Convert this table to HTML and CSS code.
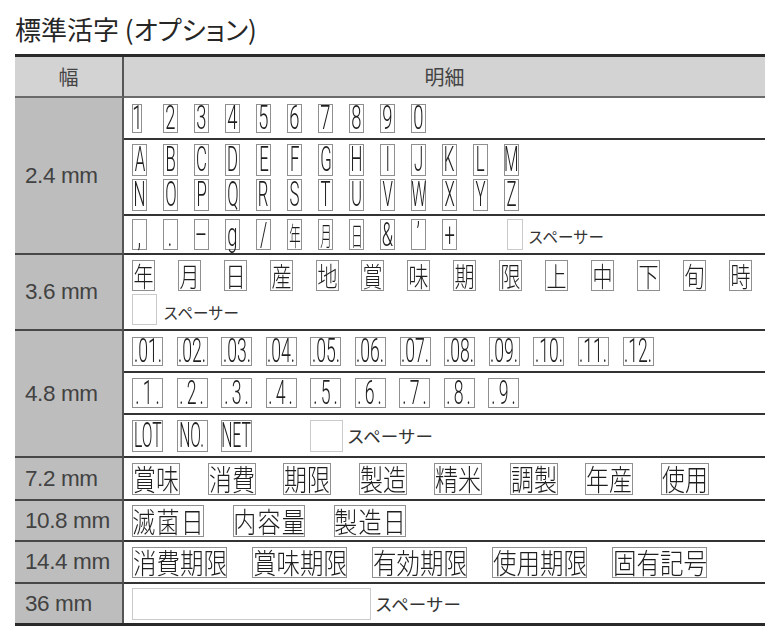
FILE: index.html
```html
<!DOCTYPE html>
<html lang="ja">
<head>
<meta charset="utf-8">
<title>標準活字 (オプション)</title>
<link rel="stylesheet" href="styles.css">
</head>
<body>
<div class="page">
  <h1 class="title">標準活字 (オプション)</h1>
  <div class="tbl">
    <div class="w hd">幅</div>
    <div class="d hd">明細</div>

    <div class="w">2.4 mm</div>
    <div class="d">
      <div class="sub s-dig">
        <div class="g31">
          <span class="b lt n1"><span>1</span></span><span class="b lt"><span>2</span></span><span class="b lt"><span>3</span></span><span class="b lt"><span>4</span></span><span class="b lt"><span>5</span></span><span class="b lt"><span>6</span></span><span class="b lt"><span>7</span></span><span class="b lt"><span>8</span></span><span class="b lt"><span>9</span></span><span class="b lt"><span>0</span></span>
        </div>
      </div>
      <div class="sub s-alpha">
        <div class="g31">
          <span class="b lt"><span>A</span></span><span class="b lt"><span>B</span></span><span class="b lt"><span>C</span></span><span class="b lt"><span>D</span></span><span class="b lt"><span>E</span></span><span class="b lt"><span>F</span></span><span class="b lt"><span>G</span></span><span class="b lt"><span>H</span></span><span class="b lt"><span>I</span></span><span class="b lt"><span>J</span></span><span class="b lt"><span>K</span></span><span class="b lt"><span>L</span></span><span class="b lt"><span>M</span></span>
        </div>
        <div class="g31">
          <span class="b lt"><span>N</span></span><span class="b lt"><span>O</span></span><span class="b lt"><span>P</span></span><span class="b lt"><span>Q</span></span><span class="b lt"><span>R</span></span><span class="b lt"><span>S</span></span><span class="b lt"><span>T</span></span><span class="b lt"><span>U</span></span><span class="b lt"><span>V</span></span><span class="b lt"><span>W</span></span><span class="b lt"><span>X</span></span><span class="b lt"><span>Y</span></span><span class="b lt"><span>Z</span></span>
        </div>
      </div>
      <div class="sub s-punct">
        <div class="g31">
          <span class="b lt"><span>,</span></span><span class="b lt"><span>.</span></span><span class="b lt"><span>–</span></span><span class="b lt"><span>g</span></span><span class="b lt"><span>/</span></span><span class="b cj"><span>年</span></span><span class="b cj"><span>月</span></span><span class="b cj"><span>日</span></span><span class="b lt"><span>&amp;</span></span><span class="b lt"><span>’</span></span><span class="b lt"><span>+</span></span>
        </div>
        <span class="sp"></span><span class="spt">スペーサー</span>
      </div>
    </div>

    <div class="w">3.6 mm</div>
    <div class="d">
      <div class="sub s-36">
        <div class="krow">
          <span class="b cj"><span>年</span></span><span class="b cj"><span>月</span></span><span class="b cj"><span>日</span></span><span class="b cj"><span>産</span></span><span class="b cj"><span>地</span></span><span class="b cj"><span>賞</span></span><span class="b cj"><span>味</span></span><span class="b cj"><span>期</span></span><span class="b cj"><span>限</span></span><span class="b cj"><span>上</span></span><span class="b cj"><span>中</span></span><span class="b cj"><span>下</span></span><span class="b cj"><span>旬</span></span><span class="b cj"><span>時</span></span>
        </div>
        <div class="sprow"><span class="sp"></span><span class="spt">スペーサー</span></div>
      </div>
    </div>

    <div class="w">4.8 mm</div>
    <div class="d">
      <div class="sub s-01">
        <span class="b lt"><span>.01.</span></span><span class="b lt"><span>.02.</span></span><span class="b lt"><span>.03.</span></span><span class="b lt"><span>.04.</span></span><span class="b lt"><span>.05.</span></span><span class="b lt"><span>.06.</span></span><span class="b lt"><span>.07.</span></span><span class="b lt"><span>.08.</span></span><span class="b lt"><span>.09.</span></span><span class="b lt"><span>.10.</span></span><span class="b lt"><span>.11.</span></span><span class="b lt"><span>.12.</span></span>
      </div>
      <div class="sub s-1">
        <span class="b lt"><span>.1.</span></span><span class="b lt"><span>.2.</span></span><span class="b lt"><span>.3.</span></span><span class="b lt"><span>.4.</span></span><span class="b lt"><span>.5.</span></span><span class="b lt"><span>.6.</span></span><span class="b lt"><span>.7.</span></span><span class="b lt"><span>.8.</span></span><span class="b lt"><span>.9.</span></span>
      </div>
      <div class="sub s-lot">
        <span class="b lt"><span>LOT</span></span><span class="b lt"><span>NO.</span></span><span class="b lt"><span>NET</span></span>
        <span class="sp"></span><span class="spt">スペーサー</span>
      </div>
    </div>

    <div class="w">7.2 mm</div>
    <div class="d">
      <div class="sub s-72">
        <span class="b cj"><span>賞味</span></span><span class="b cj"><span>消費</span></span><span class="b cj"><span>期限</span></span><span class="b cj"><span>製造</span></span><span class="b cj"><span>精米</span></span><span class="b cj"><span>調製</span></span><span class="b cj"><span>年産</span></span><span class="b cj"><span>使用</span></span>
      </div>
    </div>

    <div class="w">10.8 mm</div>
    <div class="d">
      <div class="sub s-108">
        <span class="b cj"><span>滅菌日</span></span><span class="b cj"><span>内容量</span></span><span class="b cj"><span>製造日</span></span>
      </div>
    </div>

    <div class="w">14.4 mm</div>
    <div class="d">
      <div class="sub s-144">
        <span class="b cj"><span>消費期限</span></span><span class="b cj"><span>賞味期限</span></span><span class="b cj"><span>有効期限</span></span><span class="b cj"><span>使用期限</span></span><span class="b cj"><span>固有記号</span></span>
      </div>
    </div>

    <div class="w last">36 mm</div>
    <div class="d">
      <div class="sub s-36mm last">
        <span class="sp"></span><span class="spt">スペーサー</span>
      </div>
    </div>
  </div>
</div>
</body>
</html>
```

FILE: styles.css
```css
* { box-sizing: border-box; }
html, body { margin: 0; padding: 0; background: #fff; }
body { font-family: "Noto Sans CJK JP", sans-serif; color: #333; }

.page { width: 780px; padding: 0 15px; }

.title {
  margin: 0;
  height: 54px;
  padding-top: 14px;
  font-size: 26px;
  line-height: 30px;
  font-weight: 400;
  color: #262626;
  font-feature-settings: "palt";
}

.tbl {
  display: grid;
  grid-template-columns: 109px 641px;
  border-top: 3px solid #2a2a2a;
  border-bottom: 3px solid #2a2a2a;
}

.w {
  background: #bdbdbd;
  border-right: 2px solid #555;
  border-bottom: 2px solid #474747;
  display: flex;
  align-items: center;
  padding-left: 10px;
  font-family: "Liberation Sans", Arial, sans-serif;
  font-size: 22.5px;
  letter-spacing: -0.4px;
  color: #424242;
}
.w.last { border-bottom: 0; }

.hd {
  background: #d3d3d3;
  height: 41px;
  display: flex;
  align-items: center;
  justify-content: center;
  font-family: "Noto Sans CJK JP", sans-serif;
  font-size: 20px;
  letter-spacing: 0;
  color: #444;
  border-bottom: 2px solid #6a6a6a;
}
.w.hd { padding-left: 0; }

.sub {
  display: flex;
  align-items: center;
  padding-left: 8px;
  border-bottom: 2px solid #333;
}
.sub.last { border-bottom: 0; }

.g31 {
  display: grid;
  grid-auto-flow: column;
  grid-auto-columns: 31px;
  justify-content: start;
  align-items: center;
}

/* glyph boxes */
.b {
  flex: none;
  display: inline-flex;
  align-items: center;
  justify-content: center;
  border: 1px solid #8f8f8f;
  color: #1e1e1e;
  overflow: visible;
  filter: grayscale(1);
}
.b > span {
  display: block;
  white-space: nowrap;
}
.lt > span {
  font-family: Roboto, "Liberation Sans", sans-serif;
  font-weight: 300;
  line-height: 0.8;
}
.cj > span {
  font-family: "Noto Sans CJK JP", sans-serif;
  font-weight: 300;
  line-height: 1;
}

/* spacer */
.sp {
  flex: none;
  display: inline-block;
  border: 1px solid #cacaca;
}
.spt {
  flex: none;
  font-family: "Noto Sans CJK JP", sans-serif;
  font-size: 15.5px;
  line-height: 1;
  color: #333;
}

/* 2.4 mm digits */
.s-dig { height: 42px; }
.s-dig .b { width: 15px; height: 29px; }
.s-dig .b.n1 { width: 10px; }
.s-dig .b > span { font-size: 34px; transform: scaleX(0.54); }

/* 2.4 mm alphabet */
.s-alpha {
  height: 76px;
  flex-direction: column;
  align-items: flex-start;
  justify-content: center;
  gap: 3px;
}
.s-alpha .b { width: 15px; height: 32px; }
.s-alpha .b > span { font-size: 35px; transform: scaleX(0.48); }

/* 2.4 mm punctuation */
.s-punct { height: 39px; }
.s-punct .b { width: 15px; height: 31px; }
.s-punct .lt > span { font-size: 34px; transform: scaleX(0.54); }
.s-punct .cj > span { font-size: 26px; transform: scaleX(0.44); }
.s-punct .sp { width: 16px; height: 31px; margin-left: 34px; }
.s-punct .spt { margin-left: 5px; align-self: flex-end; margin-bottom: 9px; }

/* 3.6 mm */
.s-36 {
  height: 76px;
  flex-direction: column;
  align-items: flex-start;
  justify-content: flex-start;
  padding-top: 5px;
  gap: 3px;
}
.krow { display: flex; gap: 22.9px; }
.s-36 .b { width: 23px; height: 31px; }
.s-36 .b > span { font-size: 27px; transform: scaleX(0.74); }
.sprow { display: flex; align-items: flex-end; }
.sprow .sp { width: 25px; height: 31px; }
.sprow .spt { margin-left: 6px; margin-bottom: 5px; }

/* 4.8 mm */
.s-01 { height: 42px; gap: 13.6px; }
.s-01 .b { width: 31px; height: 29px; }
.s-01 .b > span { font-size: 34px; transform: scaleX(0.52); }

.s-1 { height: 42px; gap: 13.5px; }
.s-1 .b { width: 31px; height: 30px; }
.s-1 .b > span { font-size: 34px; letter-spacing: 6px; padding-left: 6px; transform: scaleX(0.52); }

.s-lot { height: 43px; gap: 13.5px; }
.s-lot .b { width: 31px; height: 32px; }
.s-lot .b > span { font-size: 35px; transform: scaleX(0.45); }
.s-lot .sp { width: 33px; height: 32px; margin-left: 44.5px; }
.s-lot .spt { font-size: 17.5px; margin-left: -9.5px; }

/* 7.2 mm */
.s-72 { height: 43px; gap: 27.5px; }
.s-72 .b { width: 48px; height: 32px; }
.s-72 .b > span { font-size: 29px; transform: scaleX(0.79); }

/* 10.8 mm */
.s-108 { height: 41px; gap: 29px; }
.s-108 .b { width: 72px; height: 32px; }
.s-108 .b > span { font-size: 28px; letter-spacing: 1.5px; padding-left: 1.5px; transform: scaleX(0.82); }

/* 14.4 mm */
.s-144 { height: 42px; gap: 25px; }
.s-144 .b { width: 95px; height: 31px; }
.s-144 .b > span { font-size: 28px; transform: scaleX(0.84); }

/* 36 mm */
.s-36mm { height: 39px; }
.s-36mm .sp { width: 239px; height: 32px; }
.s-36mm .spt { font-size: 17.5px; margin-left: 4px; }
```
